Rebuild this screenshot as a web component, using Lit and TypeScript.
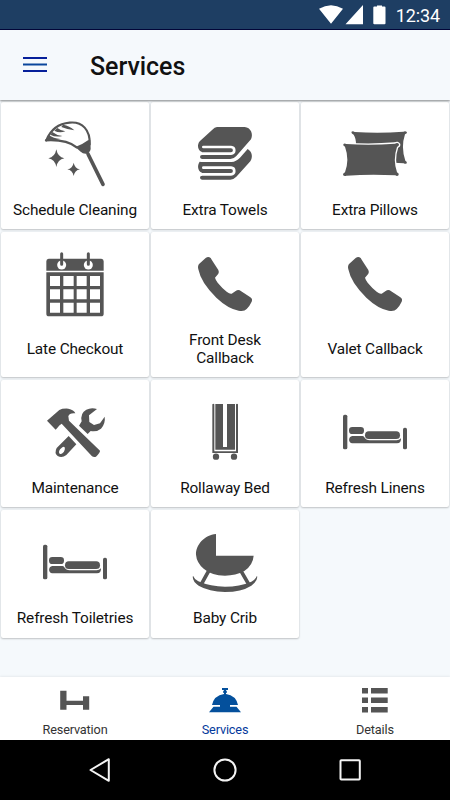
import { LitElement, html, svg, css } from "lit";
import { customElement, property } from "lit/decorators.js";
import { classMap } from "lit/directives/class-map.js";

const bed = svg`
  <rect x="129" y="116" width="13" height="104" rx="5"/>
  <rect x="309" y="155" width="12" height="65" rx="5"/>
  <rect x="147" y="153" width="45" height="21" rx="10"/>
  <path d="M157 180H187Q191 180 193 184Q198 193 209 193H290Q297 193 303 187Q304 202 291 202H157C144 201 144 181 157 180Z"/>
  <rect x="195" y="166" width="105" height="23" rx="11.5"/>`;

const phone = svg`
  <path d="M148 101L167 84Q175 78 182 84L186 91L205 120Q208 126 205 131L195 143Q196 148 203 158Q216 174 230 185Q240 193 245 191L257 183Q263 179 269 181L300 201Q309 206 305 215Q299 228 290 237Q283 245 266 242Q234 236 199 203Q153 159 145 118Q142 107 148 101Z"/>`;

const icons: Record<string, { top: number; art: unknown }> = {
  cleaning: {
    top: 60,
    art: svg`
      <path class="line" stroke-width="6.5" d="M139 127C151 97 176 77 209 74C247 70 271 96 269 139"/>
      <path class="line" stroke-width="7" d="M138 127C174 125 205 128 230 148"/>
      <path d="M226 147Q247 140 264 127L271 126L272 153Q270 164 259 167Q249 168 242 161Z"/>
      <path d="M189 80Q209 83 223 97Q204 95 184 87ZM172 90Q184 99 196 100Q178 107 163 98ZM157 102Q171 113 187 114Q167 119 151 110ZM147 112Q160 121 181 123Q161 129 141 125Z"/>
      <path class="line" stroke-width="11" d="M264 168L309 259"/>
      <path d="M169 154Q173 177 193 181Q173 185 169 207Q165 185 145 181Q165 177 169 154ZM221 194Q224 211 240 214Q224 217 221 234Q218 217 202 214Q218 211 221 194Z"/>`,
  },
  towels: {
    top: 60,
    art: svg`
      <path d="M201 87H284C302 88 311 108 303 124L259 174Q251 183 241 183H156Q150 182 150 177Q150 171 156 171V162C143 158 140 139 150 129L187 95Q194 88 201 87Z"/>
      <path d="M149 191Q153 192 158 192H245Q258 191 270 179L293 153C307 161 309 178 301 190L259 236Q250 245 241 245H156Q150 244 150 239Q150 233 156 233V224C143 220 141 201 149 191Z"/>
      <path class="gap" stroke-width="8" d="M160 147H243C256 148 256 166 243 167H152"/>
      <path class="gap" stroke-width="8" d="M160 209H243C256 210 256 228 243 229H152"/>`,
  },
  pillows: {
    top: 60,
    art: svg`
      <path d="M154 102Q158 98 164 102Q239 107 310 101Q317 98 321 103Q321 107 315 109Q302 148 316 188Q323 192 320 196Q317 199 311 196Q288 193 258 195L168 140Q168 120 161 110Q154 107 154 102Z"/>
      <path class="cutout" d="M130 139Q133 134 139 138Q211 143 285 137Q293 132 297 139Q298 144 291 147Q278 185 291 223Q298 226 296 231Q292 236 286 232Q213 228 139 233Q133 236 129 231Q128 227 135 223Q149 184 135 146Q128 143 130 139Z"/>`,
  },
  calendar: {
    top: 54,
    art: svg`
      <path d="M146 86H304Q311 87 311 94V122H139V94Q139 87 146 86ZM139 127H311V251Q311 259 303 259H147Q139 259 139 251Z"/>
      <path class="paper" d="M150 138H180V168H150ZM190 138H221V168H190ZM230 138H260V168H230ZM270 138H300V168H270ZM150 178H180V208H150ZM190 178H221V208H190ZM230 178H260V208H230ZM270 178H300V208H270ZM150 218H180V248H150ZM190 218H221V248H190ZM230 218H260V248H230ZM270 218H300V248H270Z"/>
      <circle class="paper" cx="185" cy="105" r="13.5"/><circle class="paper" cx="265" cy="105" r="13.5"/>
      <path class="line" stroke-width="9" d="M185 71V103M265 71V103"/>`,
  },
  phone: { top: 54, art: phone },
  tools: {
    top: 60,
    art: svg`
      <path d="M141 134L178 102Q187 97 205 98Q222 101 226 112Q208 110 205 121L207 134L300 224Q301 229 288 242Q282 245 276 241L185 143Q180 145 167 161Z"/>
      <path d="M237 149L245 136Q240 111 259 101Q274 93 291 99L267 118L268 138L282 147L300 142L314 122Q317 142 303 158Q289 169 272 165L263 174Z"/>
      <path fill-rule="evenodd" d="M206 180L229 205L199 237Q186 247 173 240Q162 231 170 216ZM190 212C179 218 174 227 179 233C187 237 197 224 194 214Z"/>`,
  },
  rollaway: {
    top: 60,
    art: svg`
      <path d="M187 85Q190 82 193 85V226H258V85Q261 82 264 85V231H187Z"/>
      <path d="M196 84H219V213H231V84H255V221H196Z"/>
      <circle cx="198" cy="242" r="9.5"/><circle cx="252" cy="242" r="9.5"/>`,
  },
  bed: { top: 60, art: bed },
  crib: {
    top: 60,
    art: svg`
      <path d="M198 84V149H311Q309 177 283 195Q257 209 225 209Q184 208 161 188Q140 170 138 146C137 117 163 87 198 84Z"/>
      <path class="line butt" stroke-width="11" d="M177 193L155 233M272 193L295 233"/>
      <path d="M129 209Q132 218 145 226Q182 242 225 242Q269 242 304 227Q317 220 321 209Q325 224 304 239Q274 258 225 258Q177 257 146 239Q125 225 129 209Z"/>`,
  },
};

@customElement("service-card")
export class ServiceCard extends LitElement {
  @property() label = "";
  @property() icon = "";

  static styles = css`
    :host {
      display: flex;
      flex-direction: column;
      align-items: center;
      box-sizing: border-box;
      padding-top: 16px;
      background: #fff;
      border-radius: 2px;
      box-shadow: 0 1px 2px rgba(0, 0, 0, 0.2), 0 0 2px rgba(0, 0, 0, 0.1);
    }
    .icon {
      width: 72px;
      height: 72px;
      flex: none;
      fill: #555;
    }
    .line {
      fill: none;
      stroke: #555;
      stroke-linecap: round;
    }
    .butt {
      stroke-linecap: butt;
    }
    .gap {
      fill: none;
      stroke: #fff;
      stroke-linecap: round;
    }
    .cutout {
      stroke: #fff;
      stroke-width: 8px;
      paint-order: stroke;
    }
    .paper {
      fill: #fff;
    }
    .label {
      flex: 1;
      display: flex;
      align-items: center;
      padding-top: 2px;
      text-align: center;
      font: 400 15.4px/17.5px Roboto, sans-serif;
      color: #111;
      white-space: pre;
      letter-spacing: -0.15px;
    }
  `;

  render() {
    const { top, art } = icons[this.icon];
    return html`
      <svg class="icon" viewBox="117 ${top} 216 216" aria-hidden="true">${art}</svg>
      <div class="label">${this.label}</div>
    `;
  }
}

@customElement("app-root")
export class AppRoot extends LitElement {
  static styles = css`
    :host {
      display: flex;
      flex-direction: column;
      width: 450px;
      height: 800px;
      overflow: hidden;
      background: #f5f9fc;
      font-family: Roboto, sans-serif;
    }
    .status {
      display: flex;
      align-items: center;
      justify-content: flex-end;
      box-sizing: border-box;
      height: 30px;
      flex: none;
      padding-right: 10px;
      background: #1e3e63;
      border-bottom: 1px solid #03063a;
      color: #fff;
      font-size: 18px;
      line-height: 30px;
    }
    .signals {
      width: 72px;
      height: 29px;
      fill: #fff;
      margin-right: 5.5px;
    }
    .clock {
      padding-top: 2px;
      letter-spacing: -0.1px;
    }
    .header {
      display: flex;
      align-items: center;
      height: 70px;
      flex: none;
      padding-left: 23px;
      background: #f5f9fc;
      box-shadow: 0 1px 2px rgba(0, 0, 0, 0.45);
      z-index: 1;
    }
    .menu {
      width: 24px;
      height: 18px;
      margin-right: 43px;
    }
    .title {
      margin: 3px 0 0;
      font-size: 25px;
      font-weight: 500;
      line-height: 31px;
      letter-spacing: -0.05px;
      color: #111;
    }
    .grid {
      display: grid;
      grid-template-columns: repeat(3, 148px);
      grid-template-rows: 127px 145px 127px 128px;
      gap: 3px 2px;
      padding: 2px 1px 0;
      flex: 1;
      align-content: start;
    }
    .tabs {
      display: grid;
      grid-template-columns: repeat(3, 1fr);
      box-sizing: border-box;
      height: 63px;
      flex: none;
      background: #fff;
      box-shadow: 0 -1px 2px rgba(0, 0, 0, 0.06);
    }
    .tab {
      display: flex;
      flex-direction: column;
      align-items: center;
      padding-top: 9px;
      fill: #555;
      color: #333;
      font-size: 12.7px;
      line-height: 16px;
      letter-spacing: -0.15px;
    }
    .tab.active {
      fill: #04509c;
      color: #04399c;
    }
    .tab svg {
      width: 36px;
      height: 28px;
      margin-bottom: 8px;
    }
    .system {
      display: grid;
      grid-template-columns: repeat(3, 125px);
      justify-content: center;
      justify-items: center;
      align-items: center;
      height: 60px;
      flex: none;
      background: #000;
    }
    .system svg {
      width: 26px;
      height: 26px;
      fill: none;
      stroke: #f4f4f4;
      stroke-width: 2px;
      stroke-linejoin: round;
    }
  `;

  private services = [
    ["Schedule Cleaning", "cleaning"],
    ["Extra Towels", "towels"],
    ["Extra Pillows", "pillows"],
    ["Late Checkout", "calendar"],
    ["Front Desk\nCallback", "phone"],
    ["Valet Callback", "phone"],
    ["Maintenance", "tools"],
    ["Rollaway Bed", "rollaway"],
    ["Refresh Linens", "bed"],
    ["Refresh Toiletries", "bed"],
    ["Baby Crib", "crib"],
  ];

  private tabs = [
    {
      label: "Reservation",
      art: svg`<path d="M3.2 4.7H9.5V14.7H26V10.3H32.2V23.7H26V19H9.5V23.7H3.2Z"/>`,
    },
    {
      label: "Services",
      active: true,
      art: svg`<path d="M15 2H21V4H19.2V5.2H20V6.8H19V8Q29 9.5 31 19H23V20.8H29.5L34 26.2H2L6.5 20.8H13V19H5Q7 9.5 17 8V6.8H16V5.2H16.8V4H15Z"/>`,
    },
    {
      label: "Details",
      art: svg`<path d="M5 2H11V7.5H5ZM14 2H30.7V7.5H14ZM5 11.5H11V17H5ZM14 11.5H30.7V17H14ZM5 21H11V26.5H5ZM14 21H30.7V26.5H14Z"/>`,
    },
  ];

  render() {
    return html`
      <div class="status">
        <svg class="signals" viewBox="319 0 72 29">
          <path d="M320 8.8Q332 1.7 344 8.8L332 23.7ZM364 5V24.3H346.5ZM376 6.5H378V5.5H383V6.5H385.5Q386.5 6.5 386.5 7.5V23.3Q386.5 24.3 385.5 24.3H375.3Q374.3 24.3 374.3 23.3V7.5Q374.3 6.5 375.3 6.5Z"/>
        </svg>
        <div class="clock">12:34</div>
      </div>
      <header class="header">
        <svg class="menu" viewBox="0 0 24 18">
          <path fill="#06209a" d="M0 1H24V3H0ZM0 14H24V16H0Z"/>
          <path fill="#0a469c" d="M0 7.5H24V9.5H0Z"/>
        </svg>
        <h1 class="title">Services</h1>
      </header>
      <main class="grid">
        ${this.services.map(
          ([label, icon]) => html`<service-card .label=${label} .icon=${icon}></service-card>`
        )}
      </main>
      <nav class="tabs">
        ${this.tabs.map(
          (t) => html`<div class=${classMap({ tab: true, active: !!t.active })}>
            <svg viewBox="0 0 36 28">${t.art}</svg>
            <span>${t.label}</span>
          </div>`
        )}
      </nav>
      <div class="system">
        <svg viewBox="0 0 26 26"><path d="M21.8 2.2V23.8L3.5 13Z"/></svg>
        <svg viewBox="0 0 26 26"><circle cx="13" cy="13" r="10.6"/></svg>
        <svg viewBox="0 0 26 26"><rect x="3.5" y="3.3" width="19.3" height="19.3" rx="0.8"/></svg>
      </div>
    `;
  }
}
